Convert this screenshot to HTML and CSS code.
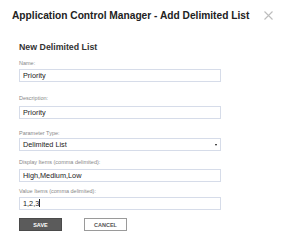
FILE: index.html
```html
<!DOCTYPE html>
<html lang="en">
<head>
    <meta charset="UTF-8">
    <meta name="viewport" content="width=device-width, initial-scale=1.0">
    <title>Add Delimited List</title>
    <link rel="stylesheet" href="styles.css">
</head>
<body>
    <div class="dialog">
        <div class="dialog-header">
            <h1>Application Control Manager - Add Delimited List</h1>
            <svg class="close" width="9" height="9" viewBox="0 0 9 9">
                <path d="M0.5 0.5L8.5 8.5M8.5 0.5L0.5 8.5" stroke="#bdbdbd" stroke-width="1.1" fill="none"/>
            </svg>
        </div>

        <form class="form">
            <h2>New Delimited List</h2>

            <div class="field name">
                <label>Name:</label>
                <input type="text" value="Priority">
            </div>

            <div class="field desc">
                <label>Description:</label>
                <input type="text" value="Priority">
            </div>

            <div class="field type">
                <label>Parameter Type:</label>
                <div class="select">
                    <span>Delimited List</span>
                    <span class="caret"></span>
                </div>
            </div>

            <div class="field display">
                <label>Display Items (comma delimited):</label>
                <input type="text" value="High,Medium,Low">
            </div>

            <div class="field values">
                <label>Value Items (comma delimited):</label>
                <div class="input">1,2,3<span class="cursor"></span></div>
            </div>

            <div class="actions">
                <button type="button" class="btn-save">SAVE</button>
                <button type="button" class="btn-cancel">CANCEL</button>
            </div>
        </form>
    </div>
</body>
</html>
```

FILE: styles.css
```css
body {
    margin: 0;
    background: #fff;
    font-family: "Liberation Sans", Arial, sans-serif;
    color: #222;
}
.dialog {
    width: 283px;
    height: 243px;
}
.dialog-header {
    display: flex;
    align-items: center;
    justify-content: space-between;
    padding: 10px 10px 0 12px;
}
.dialog-header h1 {
    margin: 0;
    font-size: 10.2px;
    font-weight: bold;
    color: #222;
    line-height: 11px;
}
.close {
    display: block;
}
.form {
    padding: 0 0 0 19px;
    width: 202px;
}
.form h2 {
    margin: 21px 0 8px;
    font-size: 8.8px;
    font-weight: bold;
    color: #333;
    line-height: 10px;
}
.field label {
    display: block;
    font-size: 5.5px;
    color: #888;
    line-height: 7px;
}
.field.name { margin-bottom: 13px; }
.field.name label { margin-bottom: 2px; }
.field.desc { margin-bottom: 11px; }
.field.desc label { margin-bottom: 4px; }
.field.type { margin-bottom: 8px; }
.field.type label { margin-bottom: 1px; }
.field.display { margin-bottom: 6px; }
.field.display label { margin-bottom: 3px; }
.field.values label { margin-bottom: 2px; }

.field input,
.field .input,
.select {
    box-sizing: border-box;
    display: block;
    width: 202px;
    height: 13px;
    margin: 0;
    padding: 0 3px;
    border: 1px solid #d6dce9;
    background: #fff;
    font-family: "Liberation Sans", Arial, sans-serif;
    font-size: 7.3px;
    line-height: 11px;
    color: #222;
    outline: none;
}
.select {
    display: flex;
    align-items: center;
    justify-content: space-between;
    padding-right: 3px;
}
.caret {
    width: 0;
    height: 0;
    border-left: 1.5px solid transparent;
    border-right: 1.5px solid transparent;
    border-top: 2px solid #111;
}
.cursor {
    display: inline-block;
    width: 1px;
    height: 8px;
    background: #222;
    vertical-align: -1px;
}
.actions {
    display: flex;
    gap: 22px;
    margin-top: 8px;
}
.actions button {
    box-sizing: border-box;
    width: 43px;
    height: 13px;
    padding: 0;
    font-family: "Liberation Sans", Arial, sans-serif;
    font-size: 5.5px;
    font-weight: bold;
    cursor: pointer;
}
.btn-save {
    background: #5b5b5b;
    border: 1px solid #4a4a4a;
    color: #fff;
}
.btn-cancel {
    background: #fff;
    border: 1px solid #9a9a9a;
    color: #555;
    font-weight: normal;
}
```
